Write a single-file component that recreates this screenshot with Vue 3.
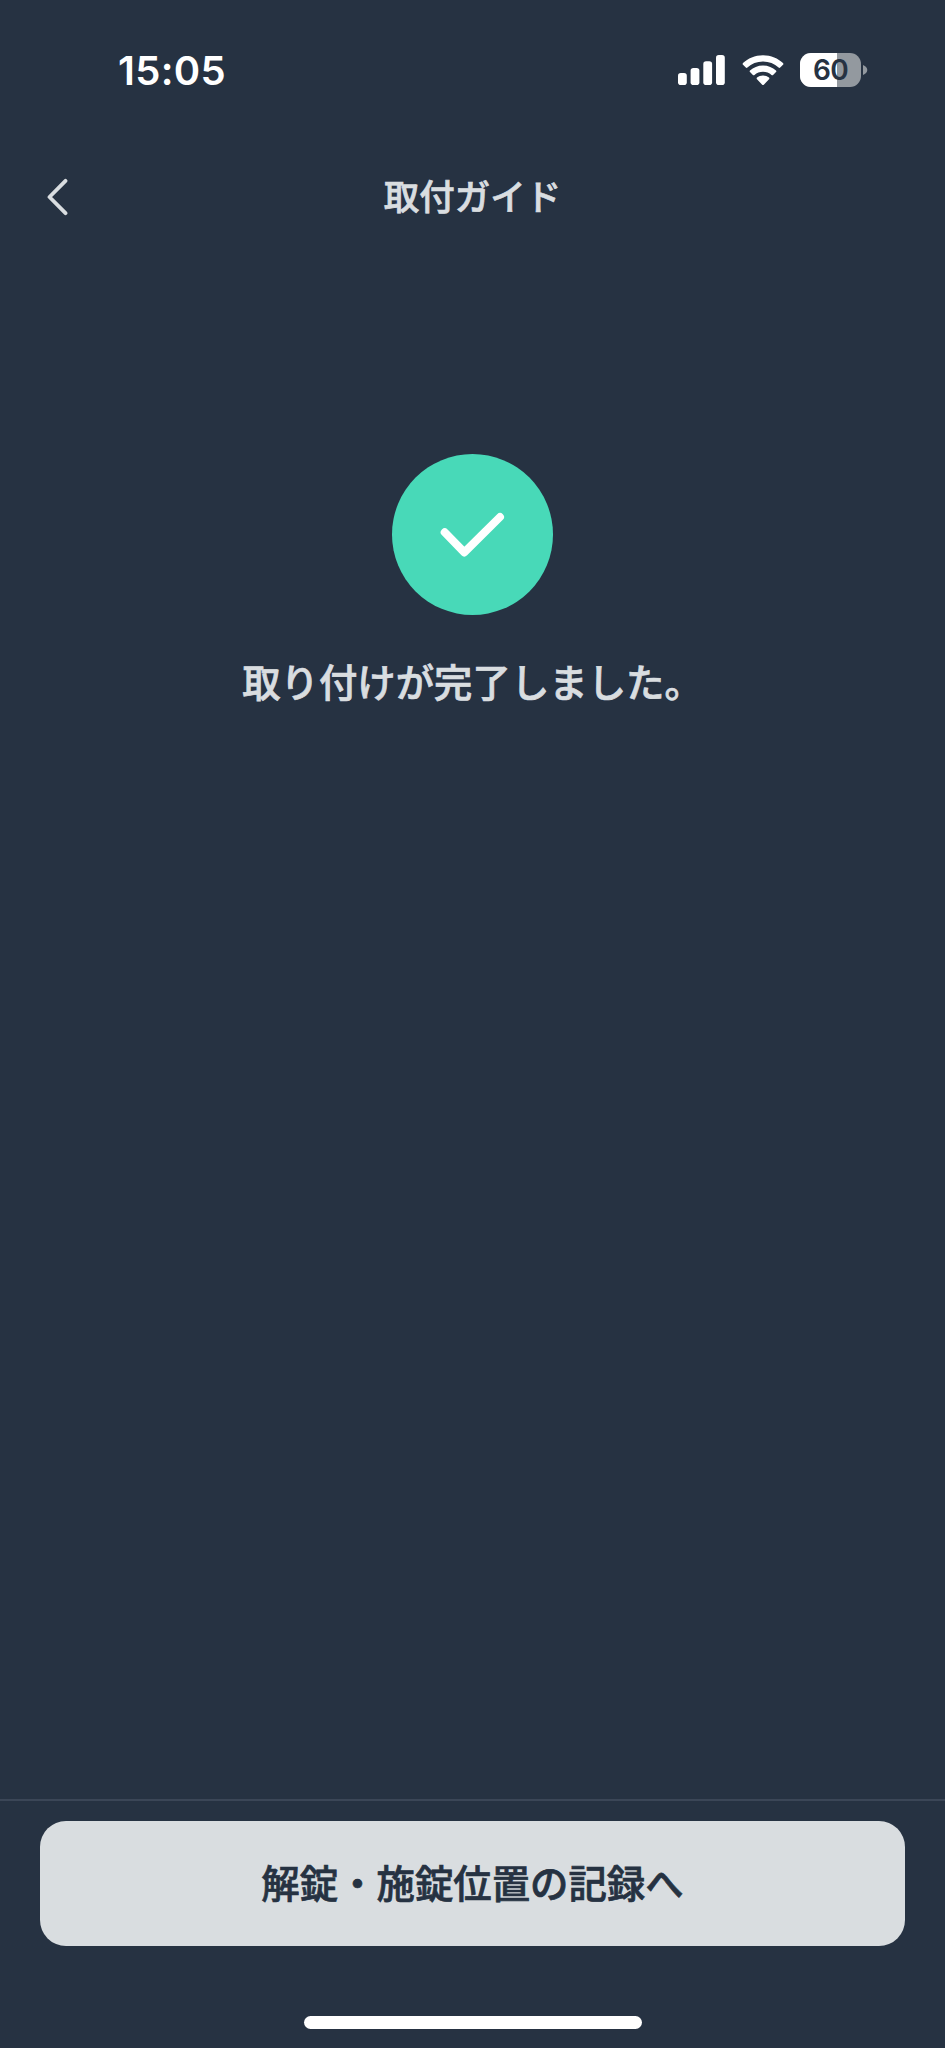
<script setup>
import { ref } from 'vue'

const time = ref('15:05')
const battery = ref(60)

// x, top and height of each signal bar
const bars = [
  { x: 0, y: 18, h: 12 },
  { x: 12.6, y: 13, h: 17 },
  { x: 25.3, y: 6.3, h: 23.7 },
  { x: 38, y: 0, h: 30 }
]
</script>

<template>
  <div class="screen">
    <div class="status-bar">
      <span class="time">{{ time }}</span>
      <div class="status-icons">
        <svg class="signal" width="47" height="30" viewBox="0 0 47 30">
          <rect v-for="bar in bars" :key="bar.x" :x="bar.x" :y="bar.y" width="8.8" :height="bar.h" rx="2.8" />
        </svg>
        <svg class="wifi" width="42" height="31" viewBox="0 0 42 31">
          <path d="M21 0.2C29 0.2 36.2 3.3 41 8.1C41.5 8.6 41.5 9.2 41 9.7L38.2 12.5C37.7 13 37.1 13 36.6 12.5C32.5 8.7 27 6.5 21 6.5S9.5 8.7 5.4 12.5C4.9 13 4.3 13 3.8 12.5L1 9.7C0.5 9.2 0.5 8.6 1 8.1C5.8 3.3 13 0.2 21 0.2Z" />
          <path d="M21 10.5C26.2 10.5 30.7 12.5 34 15.5C34.5 16 34.5 16.6 34 17.1L31.1 19.9C30.6 20.4 30 20.4 29.5 19.9C27.2 17.9 24.3 16.7 21 16.7S14.8 17.9 12.5 19.9C12 20.4 11.4 20.4 10.9 19.9L8 17.1C7.5 16.6 7.5 16 8 15.5C11.3 12.5 15.8 10.5 21 10.5Z" />
          <path d="M21 20.5C23.3 20.5 25.4 21.3 27 22.6C27.5 23.1 27.5 23.7 27 24.2L21.8 29.7C21.3 30.2 20.7 30.2 20.2 29.7L15 24.2C14.5 23.7 14.5 23.1 15 22.6C16.6 21.3 18.7 20.5 21 20.5Z" />
        </svg>
        <div class="battery">
          <div class="battery-body">
            <div class="battery-level" :style="{ width: battery + '%' }"></div>
            <span class="battery-text">{{ battery }}</span>
          </div>
          <svg width="5" height="10" viewBox="0 0 5 10">
            <path d="M0 0C2.5 1 4.3 2.7 4.3 5S2.5 9 0 10Z" />
          </svg>
        </div>
      </div>
    </div>

    <header class="nav">
      <button class="back" aria-label="戻る">
        <svg width="22" height="38" viewBox="0 0 22 38">
          <path d="M18.5 2.8L2.5 19L18.5 35.2" />
        </svg>
      </button>
      <h1 class="title">取付ガイド</h1>
    </header>

    <main class="content">
      <div class="check">
        <svg width="161" height="161" viewBox="0 0 161 161">
          <path d="M52.7 78.3L72.3 98.4L108 63" />
        </svg>
      </div>
      <p class="message">取り付けが完了しました。</p>
    </main>

    <footer class="footer">
      <button class="next">解錠・施錠位置の記録へ</button>
      <div class="home-indicator"></div>
    </footer>
  </div>
</template>

<style>
body {
  background-color: #263242;
}
</style>

<style scoped>
.screen {
  display: flex;
  flex-direction: column;
  height: 2048px;
  overflow: hidden;
  background-color: #263242;
  color: #d9dde0;
  font-family: "Noto Sans CJK JP", sans-serif;
  font-weight: 500;
}

button {
  border: none;
  padding: 0;
  font: inherit;
  cursor: pointer;
}

.status-bar {
  display: flex;
  justify-content: space-between;
  align-items: center;
  height: 140px;
  padding: 0 77px 0 118px;
  box-sizing: border-box;
  color: #fff;
}

.time {
  padding-top: 2px;
  font-family: Inter, sans-serif;
  font-size: 40px;
  font-weight: 600;
  line-height: 48px;
  letter-spacing: 0.3px;
}

.status-icons {
  display: flex;
  align-items: center;
  fill: #fff;
}

.wifi {
  margin-left: 17px;
}

.battery {
  display: flex;
  align-items: center;
  gap: 2px;
  margin-left: 16px;
  fill: #93999f;
}

.battery-body {
  position: relative;
  width: 61px;
  height: 34px;
  border-radius: 11px;
  overflow: hidden;
  background-color: #93999f;
}

.battery-level {
  height: 100%;
  background-color: #fff;
}

.battery-text {
  position: absolute;
  inset: 0;
  color: #263242;
  font-family: Inter, sans-serif;
  font-size: 28px;
  font-weight: 600;
  line-height: 35px;
  letter-spacing: -0.8px;
  text-align: center;
}

.nav {
  display: grid;
  grid-template-columns: 100px 1fr 100px;
  align-items: center;
  height: 114px;
}

.back {
  display: flex;
  margin-left: 47px;
  width: 22px;
  background: none;
}

.back path {
  fill: none;
  stroke: #d9dde0;
  stroke-width: 3.8;
  stroke-linecap: round;
  stroke-linejoin: round;
}

.title,
.message,
.next {
  -webkit-text-stroke: 0.7px currentColor;
}

.title {
  margin: 0;
  padding-bottom: 4px;
  font-size: 35.5px;
  font-weight: 500;
  line-height: 52px;
  text-align: center;
}

.content {
  flex: 1;
  display: flex;
  flex-direction: column;
  align-items: center;
  padding-top: 200px;
}

.check {
  width: 161px;
  height: 161px;
  border-radius: 50%;
  background-color: #48d9b8;
}

.check path {
  fill: none;
  stroke: #fff;
  stroke-width: 8;
  stroke-linecap: round;
  stroke-linejoin: round;
}

.message {
  margin: 37px 0 0;
  font-size: 38.4px;
  line-height: 56px;
}

.footer {
  display: flex;
  flex-direction: column;
  align-items: center;
  height: 249px;
  box-sizing: border-box;
  border-top: 2px solid #3b4657;
  padding: 20px 40px 0;
}

.next {
  width: 100%;
  height: 125px;
  padding-bottom: 5px;
  border-radius: 26px;
  background-color: #d9dde0;
  color: #263242;
  font-size: 38.4px;
  line-height: 56px;
}

.home-indicator {
  width: 338px;
  height: 13px;
  margin-top: 70px;
  border-radius: 7px;
  background-color: #fff;
}
</style>
